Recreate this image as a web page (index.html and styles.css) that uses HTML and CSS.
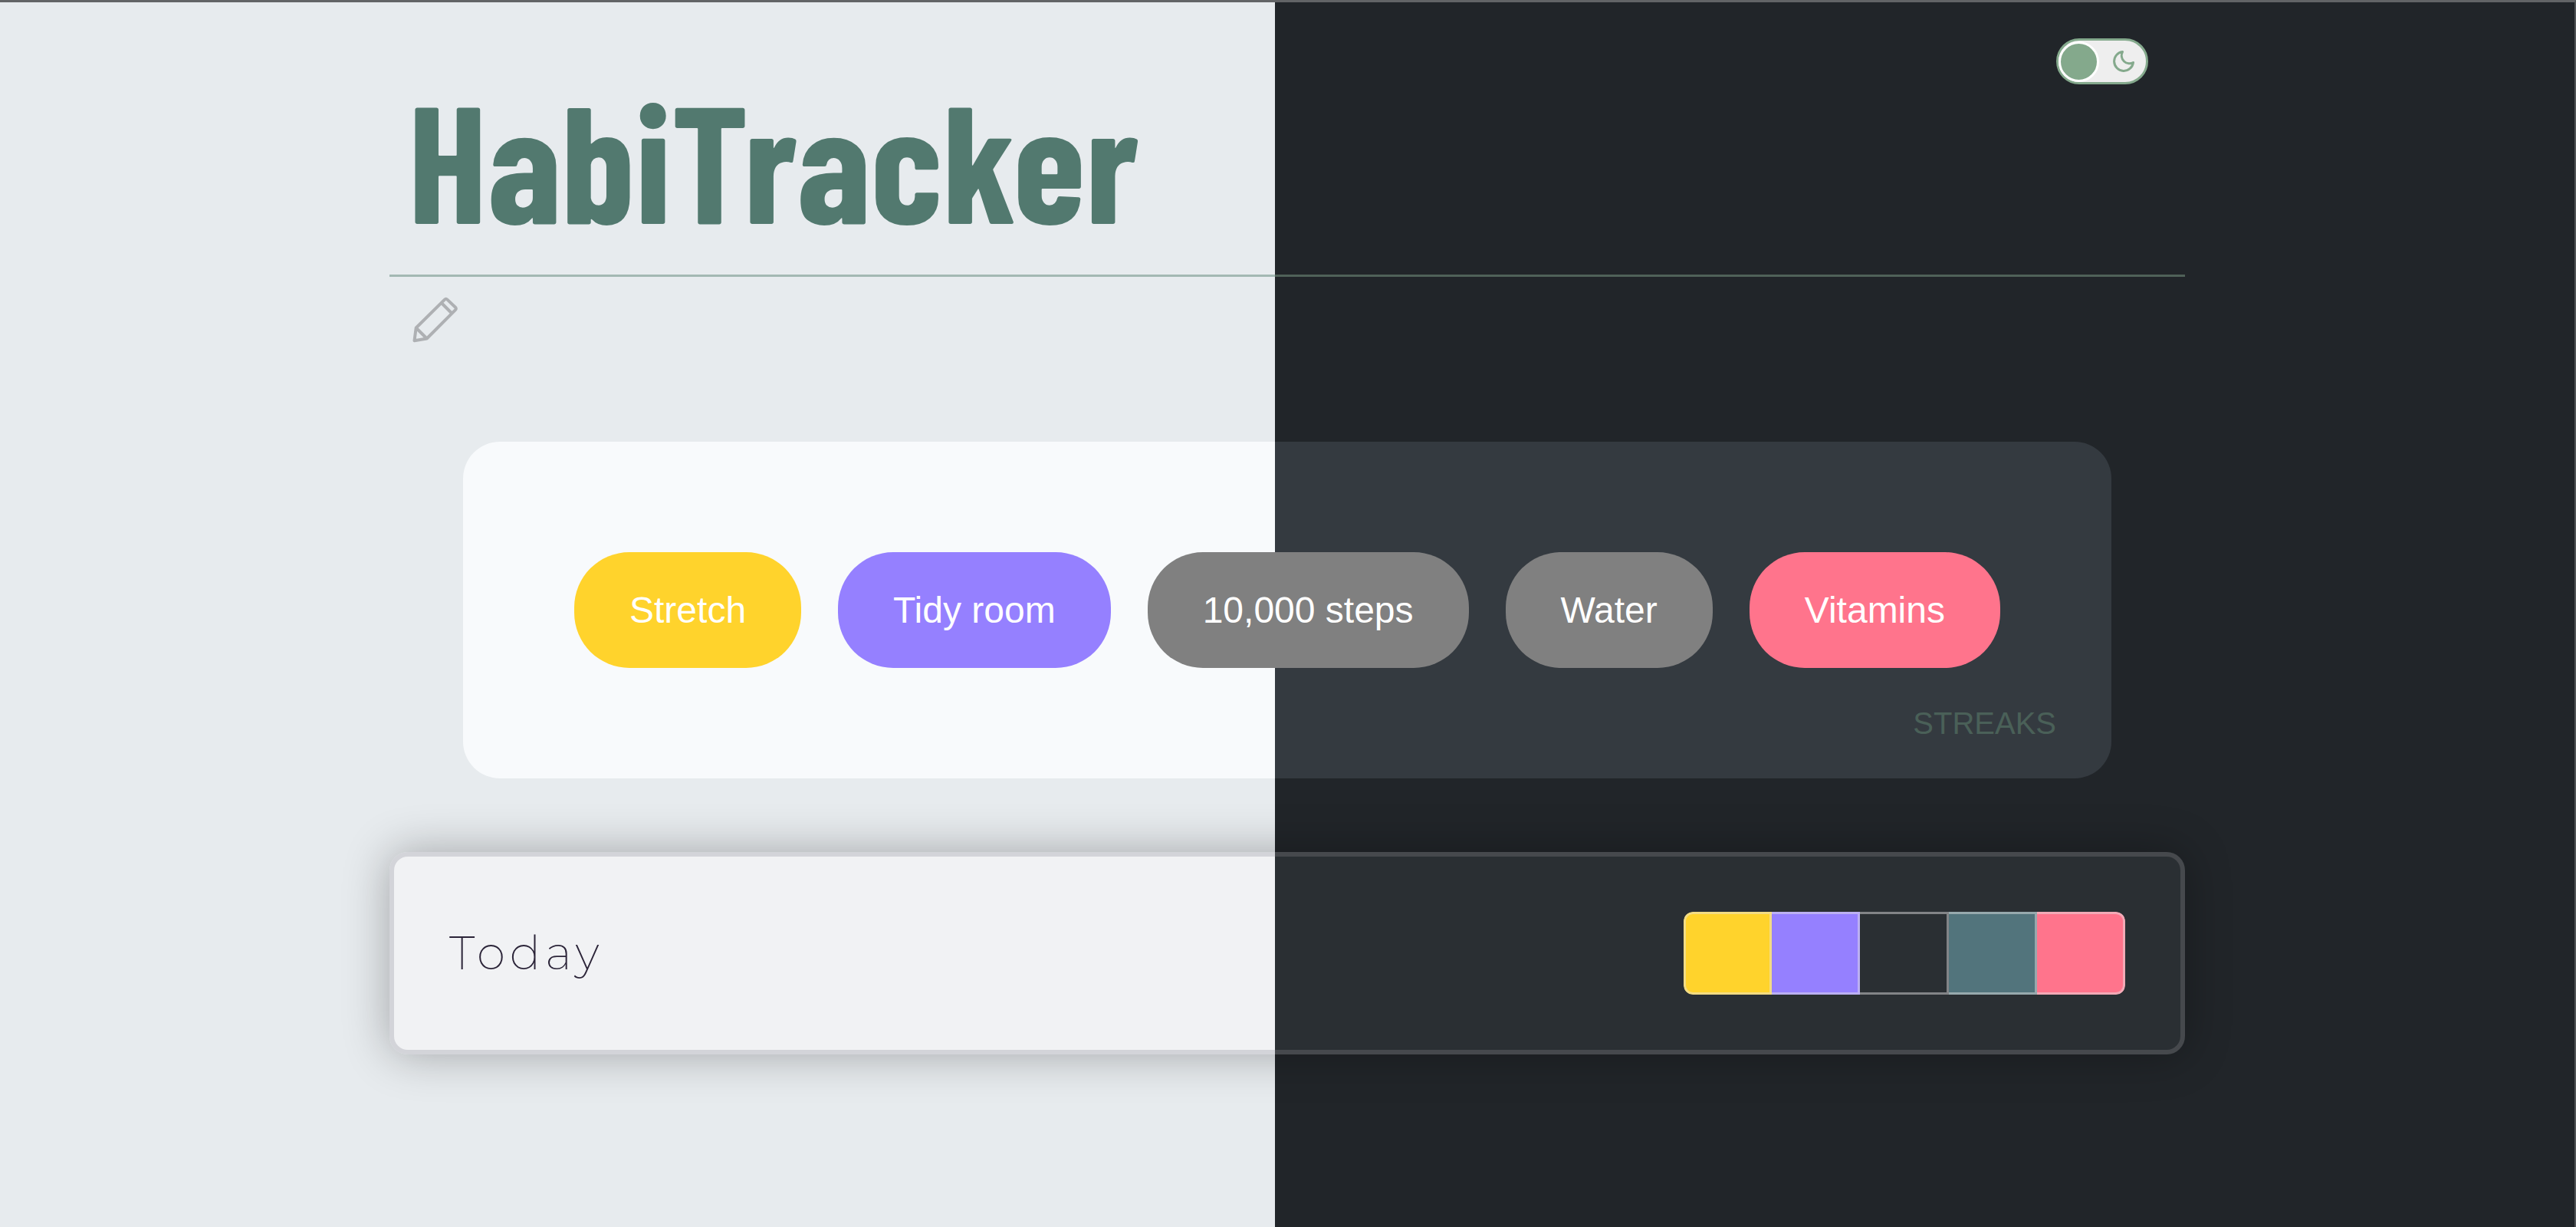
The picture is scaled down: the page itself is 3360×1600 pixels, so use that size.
FILE: index.html
```html
<!DOCTYPE html>
<html lang="en">
<head>
<meta charset="utf-8">
<title>HabiTracker</title>
<meta name="viewport" content="width=device-width, initial-scale=1">
<link rel="stylesheet" href="styles.css">
</head>
<body>
<div class="page">
  <header class="header">
    <h1 class="brand">HabiTracker</h1>
    <label class="theme">
      <input class="theme-input" type="checkbox" role="switch" aria-label="Dark theme">
      <svg class="theme-moon" viewBox="0 0 28 28" aria-hidden="true"><path d="M12.500 1.500a12.500 12.500 0 1 0 14 14c-3 2-8.500 2-12-1.500c-3.500-3.500-4-8.500-2-12.500z"/></svg>
    </label>
  </header>
  <div class="toolbar">
    <button class="edit" type="button" aria-label="Edit habits">
      <svg class="edit-icon" viewBox="0 0 60 60" aria-hidden="true"><path d="M4.700 40.500 42 3.600q1.700-1.700 3.400 0L56 13.700q1.700 1.700 0 3.400L18.700 54.500 2.500 57.200zM4.700 40.500l14 14M38.300 8.500l13 13"/></svg>
    </button>
  </div>
  <main class="main">
    <section class="habits">
      <div class="chips">
        <button class="chip yellow" type="button">Stretch</button>
        <button class="chip purple" type="button">Tidy room</button>
        <button class="chip" type="button">10,000 steps</button>
        <button class="chip" type="button">Water</button>
        <button class="chip pink" type="button">Vitamins</button>
      </div>
      <button class="streaks" type="button">STREAKS</button>
    </section>
    <section class="day">
      <h2 class="day-name">Today</h2>
      <ul class="marks">
        <li class="mark yellow"></li>
        <li class="mark purple"></li>
        <li class="mark"></li>
        <li class="mark teal"></li>
        <li class="mark pink"></li>
      </ul>
    </section>
  </main>
</div>
</body>
</html>
```
FILE: styles.css
```css
:root {
  --split: 49.5vw;
  --page: linear-gradient(90deg, #e7ebee var(--split), #212529 var(--split));
  --panel: linear-gradient(90deg, #f8fafc var(--split), #343a40 var(--split));
  --card: linear-gradient(90deg, #f1f2f4 var(--split), #2a2f33 var(--split));
  --card-edge: linear-gradient(90deg, #d3d4d9 var(--split), #46494d var(--split));
  --rule: linear-gradient(90deg, #a3b8b3 var(--split), #4f6158 var(--split));
}

* { box-sizing: border-box; }

body {
  margin: 0;
  min-height: 100vh;
  border-top: 3px solid #626466;
  border-right: 2px solid #515456;
  background: var(--page) fixed;
  font-family: "Liberation Sans", Arial, sans-serif;
}

button {
  border: 0;
  padding: 0;
  background: none;
  font: inherit;
  cursor: pointer;
}

.page {
  max-width: 2342px;
  margin: 0 auto;
}

.header {
  display: flex;
  justify-content: space-between;
  align-items: flex-start;
  padding: 47px 48px 0 24px;
  height: 358px;
  position: relative;
}

.header::after {
  content: "";
  position: absolute;
  inset: auto 0 0;
  height: 3px;
  background: var(--rule) fixed;
}

.brand {
  margin: 0;
  padding-top: 36px;
  color: #52796f;
  font: 700 216px/240px "Barlow Condensed", "Liberation Sans Narrow", sans-serif;
}

.theme {
  display: flex;
  align-items: center;
  justify-content: space-between;
  width: 120px;
  height: 60px;
  padding-right: 15px;
  border: 3px solid #84a98c;
  border-radius: 30px;
  background: #eee;
}

.theme-input {
  appearance: none;
  width: 53px;
  height: 53px;
  margin: 0;
  border: 3px solid #fff;
  border-radius: 50%;
  background: #84a98c;
}

.theme-moon {
  width: 28px;
  height: 28px;
  fill: none;
  stroke: #84a98c;
  stroke-width: 3;
  stroke-linejoin: round;
}

.toolbar { padding: 26px 30px 0; }

.edit { display: block; }

.edit-icon {
  display: block;
  width: 60px;
  height: 60px;
  fill: none;
  stroke: #aeb0b3;
  stroke-width: 4;
  stroke-linejoin: round;
}

.main {
  display: flex;
  flex-direction: column;
  gap: 96px;
  padding-top: 129px;
}

.habits {
  display: flex;
  flex-direction: column;
  gap: 48px;
  margin: 0 96px;
  padding: 144px 72px 48px;
  border-radius: 48px;
  background: var(--panel) fixed;
}

.chips {
  display: flex;
  flex-wrap: wrap;
  justify-content: center;
  gap: 48px;
}

.chip {
  padding: 48px 72px;
  border-radius: 72px;
  background: #808080;
  color: #fff;
  font-size: 48px;
  line-height: 55px;
}

.streaks {
  align-self: flex-end;
  color: #4a6058;
  font-size: 40px;
  line-height: 48px;
}

.day {
  display: flex;
  align-items: center;
  justify-content: space-between;
  padding: 72px;
  border: 6px solid transparent;
  border-radius: 24px;
  background: var(--card) fixed padding-box, var(--card-edge) fixed border-box;
  box-shadow: 0 0 60px rgba(0, 0, 0, 0.3);
}

.day-name {
  margin: 0;
  color: #2b2438;
  font: 200 60px/72px Montserrat, Inter, sans-serif;
  letter-spacing: 6px;
}

.marks {
  display: flex;
  width: 576px;
  height: 108px;
  margin: 0;
  padding: 0;
  border-radius: 12px;
  overflow: hidden;
  list-style: none;
}

.mark {
  width: 20%;
  border: solid rgba(229, 229, 229, 0.47);
  border-width: 3px 3px 3px 0;
}

.mark:first-child {
  border-left-width: 3px;
  border-radius: 12px 0 0 12px;
}

.mark:last-child { border-radius: 0 12px 12px 0; }

.yellow { background-color: #ffd32c; }
.purple { background-color: #9580ff; }
.teal { background-color: #52747c; }
.pink { background-color: #ff748c; }
```
